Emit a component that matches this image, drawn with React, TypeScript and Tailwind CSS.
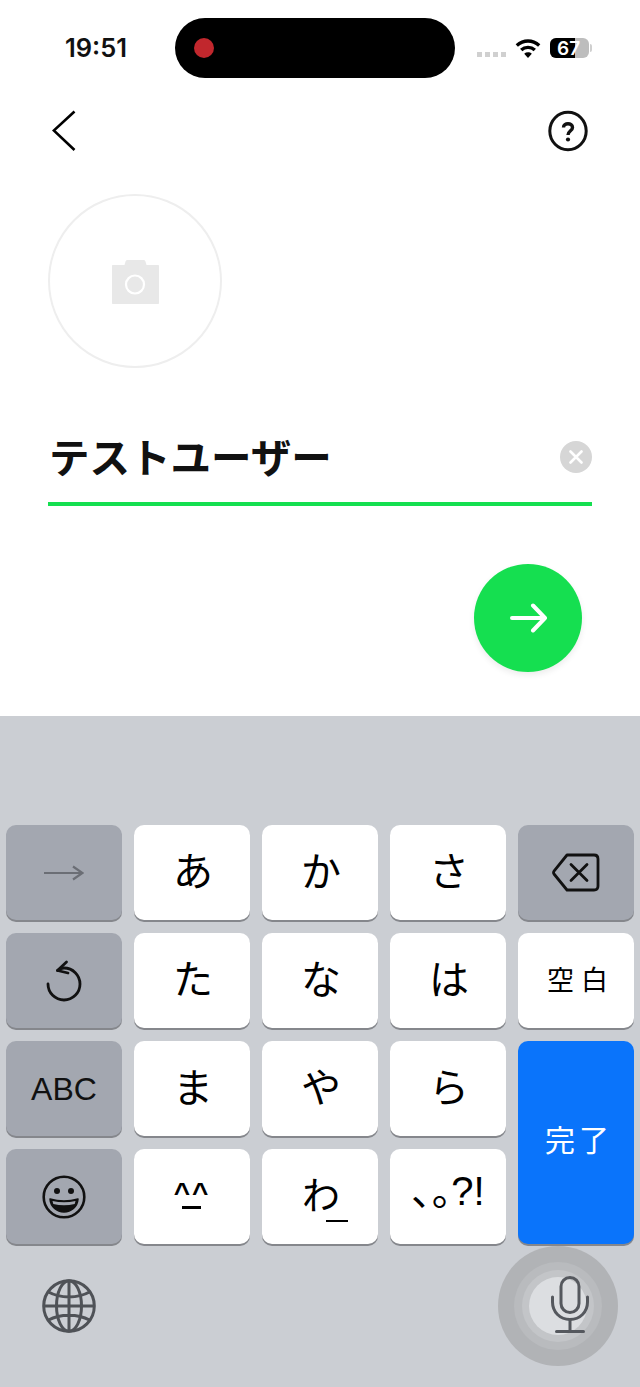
import React from "react";

const jp = { fontFamily: '"Noto Sans CJK JP", "Noto Sans", sans-serif' };

function Key({ label, cls = "" }: { label: React.ReactNode; cls?: string }) {
  return (
    <div className={`flex h-[95px] items-center justify-center rounded-[10px] bg-white text-black shadow-[0_2px_0_#85878c] ${cls}`}>
      {label}
    </div>
  );
}

function FnKey({ children }: { children: React.ReactNode }) {
  return (
    <div className="flex h-[95px] items-center justify-center rounded-[10px] bg-[#a3a7b0] text-black shadow-[0_2px_0_#85878c]">
      {children}
    </div>
  );
}

const kana = "pb-[8px] pl-[2px] text-[40px] leading-none";

export default function App() {
  return (
    <div className="flex h-[1387px] w-[640px] flex-col overflow-hidden bg-white" style={jp}>
      {/* status bar */}
      <div className="flex h-[78px] shrink-0 items-start pt-[18px]">
        <div className="flex h-[60px] w-[175px] items-center pl-[65px] text-[25.500px] font-semibold text-[#111]" style={{ fontFamily: "Inter, sans-serif" }}>
          19:51
        </div>
        <div className="flex h-[60px] w-[280px] items-center rounded-full bg-black pl-[19px]">
          <div className="h-[20px] w-[20px] rounded-full bg-[#c1272d]" />
        </div>
        <div className="flex h-[60px] items-center pl-[22px]">
          <div className="mt-[12px] flex gap-[3px]">
            <div className="h-[5px] w-[5px] bg-[#d0d0d0]" />
            <div className="h-[5px] w-[5px] bg-[#d0d0d0]" />
            <div className="h-[5px] w-[5px] bg-[#d0d0d0]" />
            <div className="h-[5px] w-[5px] bg-[#d0d0d0]" />
          </div>
          <svg width="26" height="20" viewBox="0 0 26 20" className="ml-[9px]" fill="none" stroke="#000" strokeWidth="3.400">
            <path d="M1.800 7.500C8.500 1.500 17.500 1.500 24.200 7.500" />
            <path d="M6.200 12C10 8.500 16 8.500 19.800 12" />
            <path d="M13 20L9.200 15.700C11.400 13.900 14.600 13.900 16.800 15.700Z" fill="#000" stroke="none" />
          </svg>
          <div className="ml-[9px] flex items-center">
            <div className="relative flex h-[20px] w-[39px] items-center overflow-hidden rounded-[6px] bg-[#bdbdbd]">
              <div className="absolute inset-y-0 left-0 w-[25px] bg-black" />
              <span className="relative pl-[7px] text-[19px] font-semibold leading-none text-white" style={{ fontFamily: "Inter, sans-serif" }}>67</span>
            </div>
            <div className="ml-[1px] h-[8px] w-[2px] rounded-r-full bg-[#cfcfcf]" />
          </div>
        </div>
      </div>

      {/* nav */}
      <div className="flex h-[116px] shrink-0 items-start justify-between pl-[52px] pr-[52px] pt-[32px]">
        <svg width="24" height="42" viewBox="0 0 24 42">
          <path d="M22.500 1.500L1.800 20.500L22.500 40" fill="none" stroke="#000" strokeWidth="2.600" />
        </svg>
        <svg width="40" height="42" viewBox="0 0 40 42">
          <ellipse cx="20" cy="21" rx="18.200" ry="18.700" fill="none" stroke="#111" strokeWidth="3" />
          <path d="M15.500 17.500C15.500 12.500 24.500 12.500 24.500 17.500C24.500 20.800 20.200 20.800 20 25" fill="none" stroke="#111" strokeWidth="3.400" />
          <circle cx="20" cy="29.500" r="2.100" fill="#111" />
        </svg>
      </div>

      {/* avatar */}
      <div className="ml-[48px] flex h-[174px] w-[174px] shrink-0 items-center justify-center rounded-full border-2 border-[#eeeeee]">
        <svg width="47" height="44" viewBox="0 0 47 44" className="mt-[2px]">
          <path d="M1 5H12.500L13.500 1.500C13.800 .6 14.500 0 15.500 0H31.500C32.500 0 33.200 .6 33.500 1.500L34.500 5H46C46.600 5 47 5.400 47 6V43C47 43.600 46.600 44 46 44H1C.4 44 0 43.600 0 43V6C0 5.400 .4 5 1 5Z" fill="#e8e8e8" />
          <circle cx="23" cy="24.500" r="9" fill="none" stroke="#fff" strokeWidth="2.200" />
        </svg>
      </div>

      {/* name field */}
      <div className="mx-[48px] mt-[73px] flex h-[65px] shrink-0 items-start justify-between border-b-4 border-[#15df50]">
        <div className="ml-[1px] text-[40.500px] font-semibold leading-[30px] text-[#111]">テストユーザー</div>
        <div className="flex h-[32px] w-[32px] items-center justify-center rounded-full bg-[#d6d6d6]">
          <svg width="14" height="14" viewBox="0 0 14 14">
            <path d="M1.500 1.500L12.500 12.500M12.500 1.500L1.500 12.500" stroke="#fff" strokeWidth="2.600" strokeLinecap="round" />
          </svg>
        </div>
      </div>

      {/* next */}
      <div className="flex h-[210px] shrink-0 justify-end pr-[58px] pt-[58px]">
        <div className="flex h-[108px] w-[108px] items-center justify-center rounded-full bg-[#15df50] shadow-[0_3px_6px_rgba(0,0,0,0.08)]">
          <svg width="37" height="30" viewBox="0 0 37 30" fill="none" stroke="#fff" strokeWidth="4" strokeLinecap="round" strokeLinejoin="round">
            <path d="M2 15H35M23 2.500L35 15L23 27.500" />
          </svg>
        </div>
      </div>

      {/* keyboard */}
      <div className="flex min-h-0 flex-1 flex-col bg-[#cbced3] px-[6px] pt-[109px]">
        <div className="grid grid-cols-[116px_116px_116px_116px_116px] gap-x-[12px] gap-y-[13px]">
          <FnKey>
            <svg width="40" height="16" viewBox="0 0 40 16" fill="none" stroke="#6b6e75" strokeWidth="2.200">
              <path d="M0 8H38M29 1.500L38.500 8L29 14.500" />
            </svg>
          </FnKey>
          <Key label="あ" cls={kana} />
          <Key label="か" cls={kana} />
          <Key label="さ" cls={kana} />
          <FnKey>
            <svg width="48" height="40" viewBox="0 0 48 40" fill="none" stroke="#111" strokeWidth="2.800" strokeLinejoin="round">
              <path d="M15 2H42C44.500 2 46 3.500 46 6V33C46 35.500 44.500 37 42 37H15L2 21C1.500 20.300 1.500 19 2 18.200Z" />
              <path d="M19 11.500L35 27.500M35 11.500L19 27.500" strokeLinecap="round" />
            </svg>
          </FnKey>

          <FnKey>
            <svg width="36" height="42" viewBox="0 0 36 42" fill="none" stroke="#111" strokeWidth="2.800" strokeLinecap="round" strokeLinejoin="round">
              <path d="M20.500 2L11.500 10.500L22 13" />
              <path d="M2 24A16 16 0 1 0 18 8C16 8 14 8.800 11.500 10.500" />
            </svg>
          </FnKey>
          <Key label="た" cls={kana} />
          <Key label="な" cls={kana} />
          <Key label="は" cls={kana} />
          <Key label="空白" cls="pb-[4px] pl-[10px] text-[27px] leading-none tracking-[7px]" />

          <FnKey>
            <span className="text-[32px] leading-none text-[#111]" style={{ fontFamily: '"Liberation Sans", sans-serif' }}>ABC</span>
          </FnKey>
          <Key label="ま" cls={kana} />
          <Key label="や" cls={kana} />
          <Key label="ら" cls={kana} />
          <div className="row-span-2 flex items-center justify-center rounded-[10px] bg-[#0a74fb] pb-[10px] pl-[6px] text-[30px] leading-none tracking-[4px] text-white shadow-[0_2px_0_#85878c]">
            完了
          </div>

          <FnKey>
            <svg width="44" height="44" viewBox="0 0 44 44">
              <circle cx="22" cy="22" r="20.300" fill="none" stroke="#111" strokeWidth="2.600" />
              <circle cx="15" cy="16" r="3" fill="#111" />
              <circle cx="29" cy="16" r="3" fill="#111" />
              <path d="M8 24C17 26.500 27 26.500 36 24C35.500 32 29 37 22 37C15 37 8.500 32 8 24Z" fill="#111" stroke="#111" strokeWidth="1.500" strokeLinejoin="round" />
              <path d="M10.500 26C18 27.800 26 27.800 33.500 26L32.700 29C25.500 30.600 18.500 30.600 11.300 29Z" fill="#a3a7b0" />
            </svg>
          </FnKey>
          <Key
            label={
              <span className="flex flex-col items-center">
                <span className="text-[28px] font-bold leading-[22px] tracking-[2px]" style={{ fontFamily: '"Liberation Sans", sans-serif' }}>^^</span>
                <span className="mt-[2px] h-[3px] w-[19px] bg-black" />
              </span>
            }
            cls="pb-[2px]"
          />
          <Key
            label={
              <span className="relative">
                <span className="block text-[38px] leading-[40px]">わ</span>
                <span className="absolute left-[24px] top-[47px] h-[2px] w-[22px] bg-black" />
              </span>
            }
            cls="pb-[8px] pl-[2px]"
          />
          <Key
            label={
              <span className="flex items-baseline">
                <span className="text-[40px] leading-none [font-feature-settings:'palt']">、。</span>
                <span className="text-[40px] leading-none" style={{ fontFamily: '"Liberation Sans", sans-serif' }}>?!</span>
              </span>
            }
            cls="pb-[14px]"
          />
        </div>

        {/* bottom row */}
        <div className="flex items-start justify-between pl-[36px] pr-[16px] pt-[2px]">
          <svg width="54" height="54" viewBox="0 0 54 54" className="mt-[33px]" fill="none" stroke="#4f5257" strokeWidth="3">
            <circle cx="27" cy="27" r="25.300" />
            <ellipse cx="27" cy="27" rx="12.500" ry="25.300" />
            <path d="M27 2V52M2 27H52M6.500 13C18 19.500 36 19.500 47.500 13M6.500 41C18 34.500 36 34.500 47.500 41" />
          </svg>
          <div className="relative h-[120px] w-[120px]">
            <div className="flex h-full w-full items-center justify-center rounded-full bg-[#b1b3b6]">
              <div className="flex h-[88px] w-[88px] items-center justify-center rounded-full bg-[#b9bbbe]">
                <div className="flex h-[72px] w-[72px] items-center justify-center rounded-full bg-[#c3c5c8]">
                  <div className="h-[58px] w-[58px] rounded-full bg-[#dcdee1]" />
                </div>
              </div>
            </div>
            <svg width="38" height="58" viewBox="0 0 38 58" className="absolute left-[53px] top-[30px]" fill="none" stroke="#55585e" strokeWidth="3">
              <rect x="10" y="1.500" width="18" height="35" rx="9" />
              <path d="M1.500 21V26C1.500 36 9 43.500 19 43.500C29 43.500 36.500 36 36.500 26V21" strokeLinecap="round" />
              <path d="M19 43.500V55.500M5.500 55.500H32.500" strokeLinecap="round" />
            </svg>
          </div>
        </div>
      </div>
    </div>
  );
}
